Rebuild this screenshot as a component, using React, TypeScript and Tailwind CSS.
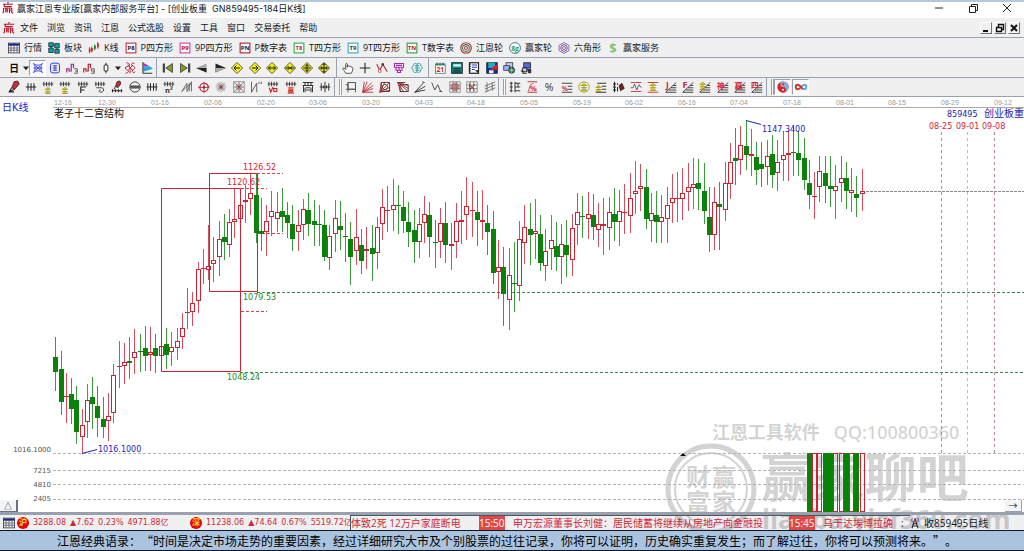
import { useState } from 'react';
import type { ReactNode } from 'react';

type Candle = [number, number, number, number, number];

// up (1) or down (0), high, low, body top, body bottom
const candles: Candle[] = [
  [0, 337, 391, 357, 372], [0, 351, 415, 369, 402], [1, 373, 423, 396, 397], [0, 378, 424, 394, 409],
  [0, 386, 444, 400, 432], [1, 409, 454, 425, 437], [1, 384, 438, 400, 422], [0, 377, 429, 397, 404],
  [0, 386, 437, 406, 418], [0, 397, 438, 419, 427], [1, 393, 441, 416, 421], [1, 364, 423, 375, 413],
  [1, 341, 388, 366, 367], [1, 343, 384, 362, 366], [0, 337, 379, 361, 363], [1, 329, 374, 352, 358],
  [0, 334, 372, 351, 352], [0, 326, 371, 348, 356], [1, 327, 371, 352, 355], [0, 334, 373, 348, 356],
  [1, 325, 371, 346, 356], [0, 328, 369, 344, 355], [1, 332, 366, 347, 352], [1, 328, 360, 341, 348],
  [1, 313, 349, 328, 337], [1, 288, 329, 312, 313], [1, 292, 326, 303, 312], [1, 262, 313, 269, 301],
  [1, 249, 284, 268, 269], [1, 225, 280, 266, 270], [1, 237, 282, 260, 264], [1, 221, 276, 239, 257],
  [0, 214, 260, 237, 242], [1, 209, 257, 222, 245], [1, 188, 238, 219, 222], [1, 188, 230, 205, 219],
  [1, 185, 223, 200, 202], [1, 173, 215, 193, 199], [0, 174, 243, 195, 233], [0, 198, 251, 231, 234],
  [1, 205, 256, 221, 232], [1, 191, 236, 211, 217], [1, 192, 232, 212, 219], [0, 188, 232, 211, 217],
  [0, 202, 238, 215, 223], [0, 205, 251, 224, 239], [1, 210, 251, 225, 232], [1, 199, 240, 209, 225],
  [0, 193, 236, 210, 224], [0, 200, 246, 221, 225], [0, 205, 246, 224, 225], [0, 210, 261, 225, 257],
  [1, 225, 270, 236, 258], [1, 200, 252, 218, 234], [0, 201, 250, 226, 230], [0, 213, 262, 236, 237],
  [0, 222, 285, 239, 257], [1, 209, 265, 237, 251], [0, 229, 274, 245, 261], [1, 227, 269, 249, 251],
  [0, 225, 281, 248, 254], [1, 217, 269, 227, 253], [1, 189, 240, 207, 224], [1, 186, 232, 210, 211],
  [1, 179, 231, 205, 210], [0, 185, 234, 205, 206], [0, 191, 233, 207, 221], [0, 202, 247, 222, 232],
  [0, 210, 263, 230, 242], [1, 208, 258, 224, 242], [1, 196, 243, 214, 223], [0, 202, 257, 215, 237],
  [0, 220, 268, 242, 243], [1, 208, 258, 223, 242], [0, 202, 263, 223, 245], [1, 223, 270, 244, 246],
  [1, 203, 258, 221, 242], [1, 191, 244, 220, 222], [1, 177, 240, 206, 215], [1, 182, 237, 210, 211],
  [0, 191, 246, 212, 220], [1, 190, 240, 220, 222], [0, 205, 255, 223, 232], [0, 211, 284, 229, 273],
  [1, 240, 299, 267, 272], [0, 247, 326, 267, 294], [1, 248, 330, 275, 300], [0, 242, 312, 283, 284],
  [1, 221, 301, 239, 286], [1, 205, 264, 227, 243], [0, 203, 265, 229, 235], [1, 199, 259, 231, 234],
  [0, 215, 271, 234, 263], [1, 229, 281, 251, 266], [1, 215, 270, 240, 249], [0, 222, 271, 246, 257],
  [1, 224, 284, 244, 257], [0, 220, 277, 245, 255], [1, 214, 276, 228, 260], [1, 193, 245, 212, 225],
  [0, 196, 238, 216, 217], [1, 192, 239, 214, 219], [0, 194, 240, 215, 227], [1, 203, 247, 224, 230],
  [1, 198, 255, 224, 226], [1, 197, 250, 212, 228], [0, 188, 241, 214, 222], [1, 190, 246, 211, 222],
  [1, 184, 234, 212, 213], [1, 173, 233, 198, 216], [1, 161, 214, 191, 194], [1, 164, 211, 186, 189],
  [0, 169, 229, 187, 219], [1, 193, 242, 213, 221], [0, 191, 243, 215, 222], [1, 195, 243, 217, 222],
  [1, 187, 243, 205, 219], [1, 174, 223, 198, 203], [1, 172, 222, 198, 199], [1, 168, 220, 193, 199],
  [1, 163, 211, 187, 192], [1, 158, 209, 184, 188], [0, 159, 210, 183, 189], [0, 163, 224, 191, 211],
  [0, 187, 252, 217, 235], [1, 187, 250, 202, 235], [0, 182, 250, 204, 207], [1, 162, 221, 183, 210],
  [1, 143, 199, 162, 184], [0, 128, 185, 158, 161], [1, 126, 175, 145, 160], [0, 120, 170, 146, 155],
  [1, 129, 176, 154, 156], [0, 142, 185, 157, 170], [0, 142, 187, 164, 169], [1, 140, 185, 156, 167],
  [0, 135, 188, 154, 175], [1, 140, 191, 162, 173], [1, 131, 181, 155, 160], [1, 130, 181, 153, 155],
  [0, 126, 176, 152, 153], [0, 131, 176, 153, 160], [0, 138, 190, 158, 180], [0, 160, 209, 183, 195],
  [1, 172, 219, 196, 197], [1, 156, 202, 171, 187], [0, 156, 203, 173, 186], [0, 156, 207, 186, 189],
  [1, 165, 219, 186, 191], [1, 156, 202, 178, 183], [0, 162, 209, 178, 191], [1, 168, 212, 190, 193],
  [0, 176, 217, 194, 198], [1, 169, 211, 191, 194],
];

const dates = [
  '12-16', '12-30', '01-16', '02-06', '02-20', '03-06', '03-20', '04-03', '04-18', '05-05',
  '05-19', '06-02', '06-16', '07-04', '07-18', '08-01', '08-15', '08-29', '09-12',
];

const RED = '#cc2233';
const GREEN = '#0a820a';

const menus = ['文件', '浏览', '资讯', '江恩', '公式选股', '设置', '工具', '窗口', '交易委托', '帮助'];

// --- Icon helpers, everything is drawn on a 16x16 grid ---
const line = (d: string, c = '#222', w = 1.3) => <path d={d} stroke={c} strokeWidth={w} fill="none" />;
const area = (d: string, c = '#222', s = 'none') => <path d={d} fill={c} stroke={s} />;
const word = (t: string, c: string, x = 8, y = 14, size = 10) => (
  <text x={x} y={y} fontSize={size} fill={c} textAnchor="middle" fontWeight="bold">{t}</text>
);
const tile = (t: string, frame: string, c: string) => (
  <>
    <rect x="1.5" y="1.5" width="13" height="13" fill="#fff" stroke={frame} strokeWidth="1.5" />
    {word(t, c, 8, 11, 8)}
  </>
);
const diamond = (inner: string) => (
  <>
    {area('M8 0.5 15.5 8 8 15.5 0.5 8Z', '#f4ee1c', '#333')}
    {line(inner, '#111', 1.3)}
  </>
);
const fan = line('M1 15 15 2M1 15H15M5 12H15M8 9H15M11 6H15', '#333', 1.2);
const comb = line('M1 4H15M2.5 1V7M6 1V7M9.5 1V7M13 1V7', '#333', 1.2);
const gridBase = 'M1 1H15V15H1ZM1 5.5H15M1 10H15M5.5 1V15M10 1V15';

const icons: Record<string, ReactNode> = {
  table: (
    <>
      <rect x="0.5" y="1.5" width="15" height="13" fill="#fff" stroke="#223" />
      {area('M1 2H15V5H1Z', '#1a2a80')}
      {line('M1 8H15M1 11H15M4 5V14M8 5V14M12 5V14', '#445', 1)}
    </>
  ),
  blocks: (
    <>
      {area('M1 1H7V6H1ZM9 2H15V8H9ZM1 8H7V14H1ZM9 10H15V15H9Z', '#18a0a0', '#123')}
      {line('M7 4 9 5M4 6V8M12 8V10', '#123')}
    </>
  ),
  kline: (
    <>
      {line('M2 7V15M5 6V14M13 0V9', '#c22', 1.2)}
      {line('M9 3V11', '#183', 1.2)}
      {area('M1 9H3.5V13H1ZM4 8H6.5V12H4ZM12 2H14.5V7H12Z', '#d22')}
      {area('M8 5H10.5V9H8Z', '#183')}
    </>
  ),
  p8: tile('P8', '#c03050', '#222'),
  p9: tile('P9', '#d040b0', '#b00'),
  pn: tile('PN', '#b02030', '#222'),
  t8: tile('T8', '#30b050', '#b33'),
  t9: tile('T9', '#30b0c0', '#333'),
  tn: tile('TN', '#30a040', '#a22'),
  wheel: (
    <>
      <circle cx="8" cy="8" r="7" fill="#fff" stroke="#a33" strokeWidth="1.6" />
      <circle cx="8" cy="8" r="4.5" fill="none" stroke="#264" strokeWidth="1.4" />
      <circle cx="8" cy="8" r="2" fill="none" stroke="#a33" strokeWidth="1.4" />
    </>
  ),
  bigWheel: (
    <>
      <circle cx="8" cy="8" r="7.2" fill="#fff" stroke="#468" strokeWidth="1.2" />
      {word('8g', '#2a9a4a', 8, 11.5, 9)}
    </>
  ),
  hex: (
    <>
      {area('M8 0.8 14.5 4.4V11.6L8 15.2 1.5 11.6V4.4Z', '#fff', '#73a')}
      <circle cx="8" cy="8" r="4.4" fill="none" stroke="#24a" strokeWidth="1.2" />
      <circle cx="8" cy="8" r="2" fill="none" stroke="#c33" strokeWidth="1.2" />
    </>
  ),
  dollar: word('$', '#7cc47c', 8, 14, 17),
  day: word('日', '#111', 8, 13, 13),
  caret: area('M4 6H12L8 11Z', '#222'),
  net: line('M2 2C6 5 10 5 14 2M2 14C6 11 10 11 14 14M2 2C5 6 5 10 2 14M14 2C11 6 11 10 14 14M5 5 11 11M11 5 5 11M2 8H14', '#2a3ad0', 1.2),
  note: (
    <>
      <rect x="2" y="1.5" width="12" height="13" rx="3" fill="none" stroke="#2a3ad0" strokeWidth="1.3" />
      {line('M5 5H11M5 8H11M5 11H11M8 5V11', '#2a3ad0', 1.2)}
    </>
  ),
  wave3: (
    <>
      {line('M1 14V9H4V12H7V3H10V8', '#a0259a', 1.6)}
      {line('M11 9H15V12H12M15 12V15H11', '#333', 1)}
    </>
  ),
  wave9: (
    <>
      {line('M1 14V9H4V12H7V3H10V8', '#b02030', 1.6)}
      {line('M15 12H11V9H15V15H11', '#333', 1)}
    </>
  ),
  candle: (
    <>
      {line('M8 1V4M8 12V15')}
      <rect x="5.5" y="4" width="5" height="8" rx="1" fill="#fff" stroke="#222" strokeWidth="1.3" />
    </>
  ),
  spiral: line('M3 1C6 1 8 3 7 5 5 7 2 5 2 8 2 11 5 10 6 12 6 14 4 15 2 15M14 2C11 0 9 3 11 5 13 6 15 6 14 9 13 11 10 10 11 13 12 15 14 14 15 13M5 3 12 12M12 4 6 10M8 7V15', '#b8283a', 1.3),
  flag: (
    <>
      {area('M3 1 12 6 3 6Z', '#d020c0')}
      {area('M3 6H12L16 9 3 13Z', '#28a8d8')}
      {line('M2.5 0V15H15', '#222', 1.2)}
    </>
  ),
  first: <>{area('M14 2V14L5 8Z', '#8a9a10', '#333')}{area('M1 2H4V14H1Z', '#444')}</>,
  last: <>{area('M2 2V14L11 8Z', '#8a9a10', '#333')}{area('M12 2H15V14H12Z', '#444')}</>,
  prev: <>{area('M14 2V14L0 8Z', '#aaa')}{area('M0 8 14 8V14Z', '#222')}</>,
  next: <>{area('M2 2V14L16 8Z', '#222')}{area('M16 8 2 8V14Z', '#aaa')}</>,
  dLeft: diamond('M12 8H4M7 5 4 8 7 11'),
  dRight: diamond('M4 8H12M9 5 12 8 9 11'),
  dBoth: diamond('M3 8H13M6 5.5 3.5 8 6 10.5M10 5.5 12.5 8 10 10.5'),
  dIn: diamond('M2 8H14M5 5.5 7.5 8 5 10.5M11 5.5 8.5 8 11 10.5'),
  dUp: diamond('M8 3V13M3 8H13M5.5 6 8 3.5 10.5 6M5.5 10 8 12.5 10.5 10'),
  dAll: diamond('M8 2V14M2 8H14M6 4 8 2 10 4M6 12 8 14 10 12M5 6V10M11 6V10'),
  hand: area('M5 15C4 12 1 10 1 8.5 2 7.5 4 8.5 5 10V3C5 1.5 7 1.5 7 3V7 5.5C8 4.5 9.5 5 9.5 6 10.5 5 12 5.7 12 7 13 6.2 14.5 7 14.5 8.5 14.5 12 13 13 12.5 15Z', '#fff', '#222'),
  plus: line('M8 1V15M1 8H15', '#222', 1.4),
  path: (
    <>
      {line('M1 3 5 11 9 3 15 13', '#b8283a', 1.5)}
      <circle cx="5" cy="12" r="2" fill="#fff" stroke="#b8283a" />
      <circle cx="9" cy="3" r="1.6" fill="#333" />
    </>
  ),
  stamp: line('M2 2H14V7H2ZM4 4.5H12M4 7V11H12V7M6 11V14H10V11M8 7V11', '#a828b0', 1.5),
  cloud: line('M3 5C3 2 7 1 8 3 10 1 14 2 13 5 16 6 15 10 13 10 13 14 9 15 8 13 6 15 2 14 3 10 0 9 1 6 3 5ZM5 5H11M5 8H12M6 11H11M8 3V13', '#189aa0', 1.2),
  cal: (
    <>
      <rect x="2" y="3" width="13" height="12" fill="#fff" stroke="#377" />
      {area('M2 2H15V5H2Z', '#5ab0a8')}
      {line('M4 1V4M8 1V4M12 1V4')}
      {word('21', '#c22', 8.5, 13.5, 9)}
    </>
  ),
  calc: (
    <>
      <rect x="1" y="1" width="14" height="14" fill="#189a98" stroke="#122" strokeWidth="1.4" />
      {area('M3 3H13V6H3Z', '#dff')}
      {line('M3 8.5H13M3 11H13M3 13.3H13', '#122', 1.3)}
    </>
  ),
  book: (
    <>
      <rect x="2" y="1" width="12" height="14" fill="#fff" stroke="#222" strokeWidth="1.6" />
      {line('M5 4H12M5 7H12M5 10H9', '#2a3ab0', 1.4)}
      {line('M1 3H4M1 6H4M1 9H4M1 12H4', '#222', 1)}
      {area('M9 11H14V15Z', '#222')}
    </>
  ),
  save: (
    <>
      <rect x="1" y="1" width="14" height="14" fill="#1b2a9a" stroke="#111" />
      {area('M3 1H12V8H3Z', '#19b0c0')}
      {area('M7 8 15 3V10H7Z', '#e02020')}
      {area('M4 11H10V15H4Z', '#eee')}
    </>
  ),
  linkPc: (
    <>
      <rect x="4" y="1" width="9" height="6" fill="#cce" stroke="#224" />
      <rect x="1" y="5" width="8" height="6" fill="#9bf" stroke="#224" />
      <circle cx="11.5" cy="11" r="4" fill="#3a8a4a" stroke="#123" />
      {line('M8 11H15M11.5 7V15', '#bde', 0.8)}
    </>
  ),
  servers: (
    <>
      <rect x="5" y="1" width="9" height="7" fill="#5a68d8" stroke="#112" />
      <rect x="3" y="8" width="6" height="5" fill="#ccd" stroke="#112" />
      {area('M9 9H15V15H11Z', '#334')}
      {line('M1 12H4V15H9', '#222', 1.4)}
    </>
  ),
  pen: (
    <>
      {area('M8 1 13 0 15 4 9 11 5 9Z', '#d02838', '#222')}
      {line('M5 9 2 14 9 11M1 14.5H8', '#222', 1.4)}
    </>
  ),
  bars: line('M1 8H15M4 3V13M8 3V13M12 3V13'),
  goldA: <>{comb}{word('金', '#a8a010', 8, 15.5, 9)}</>,
  combF: <>{comb}{line('M5 16V8H12M5 12H10', '#222', 1.5)}</>,
  combS: <>{comb}{line('M3 9H10C14 9 14 15 9 15 6 15 6 12 9 12', '#444', 1.3)}</>,
  penBars: (
    <>
      {area('M8 1 12 0 13 4 9 9 6 7Z', '#d02838', '#222')}
      {line('M1 13H15M2 11V15M6 11V15M10 11V15M14 11V15M6 7 4 11')}
    </>
  ),
  ring: (
    <>
      <circle cx="8" cy="8" r="6.8" fill="none" stroke="#333" strokeWidth="1.2" />
      {line('M1 8H15M4 5.5V10.5M6.6 5.5V10.5M9.3 5.5V10.5M12 5.5V10.5')}
    </>
  ),
  bars4: line('M1 8H15M2.5 3V13M6 3V13M10 3V13M13.5 3V13'),
  n2: <>{comb}{word('n²', '#333', 8, 15.5, 10)}</>,
  sail: line('M1 14 8 3V14M1 14 12 4M8 14 14 1V14M11 3V14', '#555', 1.1),
  target: (
    <>
      <circle cx="8" cy="8.5" r="5.5" fill="none" stroke="#b8283a" strokeWidth="1.5" />
      {line('M8 1V16M0 8.5H15M11 3 15 8', '#b8283a', 1.2)}
      <circle cx="8" cy="8.5" r="1.5" fill="#722" />
    </>
  ),
  burst: (
    <>
      {line('M8 1V15M1 8H15M3 3 13 13M13 3 3 13M5 2 11 14M11 2 5 14M2 5 14 11M2 11 14 5', '#888', 1)}
      <circle cx="8" cy="8" r="2.2" fill="#b8404a" />
    </>
  ),
  burstBox: (
    <>
      {line('M1 1H15V15H1ZM1 1 15 15M15 1 1 15M8 1V15M1 8H15', '#777', 1)}
      <circle cx="8" cy="8" r="4" fill="none" stroke="#888" />
      <circle cx="8" cy="8" r="2.2" fill="#b8404a" />
    </>
  ),
  zig: line('M2 1V15L9 3V15M12 1V4M15 1V4', '#555', 1.2),
  combRed: <>{comb}{line('M3 9 5 15 8 8M8 10H13V14H9V10', '#c22', 1.5)}</>,
  combWin: <>{comb}{word('赢', '#c22', 8, 15.5, 9)}</>,
  rails: line('M1 2H15M1 6H15M4 2V6M8 2V6M12 2V6M2 6V15M14 6V15M5 9H11M5 12H11M4 15V9M12 15V9', '#222', 1.2),
  split: line('M1 8H15M3 3V13M8 1V15M13 3V13M10 6V10M6 6V10', '#222', 1.2),
  frame: line('M4 2H14V11H4ZM1 11H14M4 2V15M14 11V15M1 5H4', '#555', 1.3),
  rays: line('M1 15 3 1M1 15 7 1M1 15 13 2M1 15 15 6M1 15 15 10M1 15H15', '#c0303a', 1.2),
  raysBox: (
    <>
      {line('M1 15 3 2M1 15 8 1M1 15 14 2M1 15 15 8M1 15 15 12', '#c0303a', 1.2)}
      {line('M3 2H14V14H3Z', '#433', 1.2)}
      <circle cx="8" cy="8" r="3.5" fill="none" stroke="#433" />
    </>
  ),
  raysFill: (
    <>
      {line('M1 2 15 14M1 2 15 10M1 2 15 6M1 2 9 15M1 2 5 15', '#c0303a', 1.3)}
      {line('M1 2H11M4 5H15V14H4Z', '#433', 1.2)}
    </>
  ),
  fork: line('M1 15 13 2M1 15 15 7M1 15 15 12M11 1 14 2', '#333', 1.2),
  vee: line('M1 2 5 12 9 5 13 14M11 14H15', '#444', 1.2),
  gridRed: <>{line(gridBase, '#777', 1)}{line('M4 4H12V12H4ZM8 2V14M2 8H14', '#a33', 1)}</>,
  gridFan: <>{line(gridBase, '#777', 1)}{line('M5 12 12 4M5 5 12 13M5 3V13', '#833', 1.3)}</>,
  channel: line('M1 7 15 1M1 11 15 5M1 15 15 9M4 2V14M11 2V13', '#555', 1),
  ladder: line('M3 1V15M8 1V15M1 3H5M1 8H5M1 13H5M8 3H15M8 8H15M8 13H15M12 3V8', '#333', 1.3),
  pctRed: <>{line('M2 1H15M2 15H15', '#a33', 1.2)}{line('M3 14 6 5 10 3', '#c44', 1.2)}{word('%', '#d03040', 10, 13.5, 10)}</>,
  pct: <text x="8" y="13" fontSize="14" fill="#333" textAnchor="middle">%</text>,
  pctLines: <>{line('M1 3H15M9 7H15M9 11H15M1 15H15', '#444', 1.3)}{word('%', '#d03040', 5, 13, 9)}</>,
  coin: <><circle cx="8" cy="8" r="7" fill="none" stroke="#a8a010" strokeWidth="1.2" />{word('金', '#a8a010', 8, 12, 10)}</>,
  goldLines: <>{line('M3 3H15M9 7H15M9 11H15M1 15H15', '#333', 1.3)}{word('金', '#a8a010', 5, 13, 9)}</>,
  penDots: <>{line('M2 1V15M0 4H4M0 8H4M0 12H4M6 3V5M6 8V14', '#222', 1.4)}{area('M8 6 12 3 15 10 10 13Z', '#722', '#222')}</>,
  waveRed: <>{line('M1 2H15M1 14H15', '#c33', 1.2)}{line('M1 9H4L6 4 9 12 12 5 15 9', '#555', 1.2)}</>,
  goldRed: <>{line('M1 2H15M1 15H15', '#c33', 1.2)}{word('金', '#a8a010', 8, 12.5, 10)}</>,
  fanJ: <>{fan}{word('J', '#d02030', 3, 9, 11)}</>,
  fanF: <>{fan}{word('F', '#d02030', 4, 9, 12)}</>,
  fanG: <>{fan}{word('金', '#a8a010', 5, 10, 10)}</>,
  fanS: <>{fan}{word('神', '#d02030', 5, 10, 10)}</>,
  fanY: <>{fan}{word('赢', '#d02030', 6, 11, 11)}</>,
  fan4: <>{fan}{word('四', '#d02030', 5, 9, 10)}</>,
  taiji: (
    <>
      <circle cx="8" cy="8" r="7.5" fill="#e02020" />
      {area('M8 0.5A7.5 7.5 0 0 1 8 15.5 3.75 3.75 0 0 0 8 8 3.75 3.75 0 0 1 8 0.5Z', '#8aa8e0')}
      <circle cx="8" cy="4.3" r="1.3" fill="#e02020" />
      <circle cx="8" cy="11.7" r="1.3" fill="#fff" />
    </>
  ),
  infinity: (
    <>
      {line('M8 8C5 4 1 4 1 8S5 12 8 8', '#d03030', 2.6)}
      {line('M8 8C11 4 15 4 15 8S11 12 8 8', '#58a8e0', 2.6)}
      {line('M5.5 5.5 10.5 10.8', '#d03030', 2.4)}
    </>
  ),
};

function Icon({ name }: { name: string }) {
  return (
    <svg viewBox="0 0 16 16" className="h-3 w-3 shrink-0 overflow-visible" aria-hidden="true">
      {icons[name]}
    </svg>
  );
}

const chartTools = [
  ['table', '行情'], ['blocks', '板块'], ['kline', 'K线'], ['p8', 'P四方形'], ['p9', '9P四方形'],
  ['pn', 'P数字表'], ['t8', 'T四方形'], ['t9', '9T四方形'], ['tn', 'T数字表'], ['wheel', '江恩轮'],
  ['bigWheel', '赢家轮'], ['hex', '六角形'], ['dollar', '赢家服务'],
];

const periodTools = ['day', 'caret', 'net', 'note', 'wave3', 'wave9', 'candle', 'caret', 'spiral', 'flag'];
const moveTools = ['first', 'last', 'prev', 'next', 'dLeft', 'dRight', 'dBoth', 'dIn', 'dUp', 'dAll'];
const cursorTools = ['hand', 'plus', 'path', 'stamp', 'cloud'];
const systemTools = ['cal', 'calc', 'book', 'save', 'linkPc', 'servers'];
const gannTools = [
  'pen', 'bars', 'goldA', 'goldA', 'combF', 'combS', 'penBars', 'ring', 'bars4', 'n2',
  'sail', 'target', 'burst', 'burstBox', 'zig', 'combRed', 'combWin', 'rails', 'split',
];
const rayTools = ['frame', 'rays', 'raysBox', 'raysFill', 'fork', 'vee', 'gridRed', 'gridFan', 'channel'];
const levelTools = [
  'ladder', 'pctRed', 'pct', 'pctLines', 'coin', 'goldLines', 'penDots', 'waveRed', 'goldRed',
  'fanJ', 'fanF', 'fanG', 'fanS', 'fanY', 'fan4',
];

function Tools({ items, className, pressed = [] }: { items: string[]; className: string; pressed?: string[] }) {
  const [active, setActive] = useState(pressed);
  const toggle = (name: string) =>
    setActive(active.includes(name) ? active.filter((n) => n !== name) : [...active, name]);

  return (
    <div className={`flex h-full items-center justify-between ${className}`}>
      {items.map((name, i) => (
        <button
          key={i}
          aria-label={name}
          onClick={() => toggle(name)}
          className={`flex h-4 items-center justify-center ${name === 'caret' ? 'w-[7px]' : 'w-[17px]'} ${
            active.includes(name) ? 'border border-white border-t-gray-400 border-l-gray-400 bg-gray-50' : ''
          }`}
        >
          <Icon name={name} />
        </button>
      ))}
    </div>
  );
}

const Divider = () => <div className="h-full w-px shrink-0 bg-gray-400" />;
const Grip = () => <div className="h-4 w-[3px] shrink-0 border-x border-gray-400 bg-white" />;

function Logo() {
  return (
    <svg viewBox="0 0 16 16" className="h-3 w-3 shrink-0" aria-hidden="true">
      {line('M1 3H15M8 0V3M3 3V6H13M3 8H13M2 8V13L1 15M5 8V14M7 8V14M10 8V15M13 8V14L15 15M5 11H7M10 11H13', '#b8182a', 1.5)}
    </svg>
  );
}

function Chart() {
  const cx = (i: number) => Math.round(55.3 + i * 5.27);
  return (
    <svg
      viewBox="0 97 1024 415"
      className="relative block w-full font-['DejaVu_Sans','Noto_Sans_CJK_SC',sans-serif] text-[8px]"
      role="img"
      aria-label="日K线"
    >
      {/* Date axis */}
      <g fill="#999" className="font-['Liberation_Sans',sans-serif] text-[7px]">
        {dates.map((d, i) => (
          <text key={d} x={Math.round(i === 1 ? 98 : i === 0 ? 54 : 46 + i * 52.65)} y="105">{d}</text>
        ))}
      </g>
      <path d="M53 107.5H1024" stroke="#aaa" />
      <text x="2" y="111" fontSize="10" fill="#2222cc">日K线</text>
      <text x="54" y="117" fontSize="10" fill="#111">老子十二宫结构</text>
      <text x="947" y="117" fill="#2222aa">859495</text>
      <text x="984" y="117" fontSize="10" fill="#2222aa">创业板重</text>
      <g fill="#dd2233">
        <text x="929" y="129">08-25</text>
        <text x="956" y="129">09-01</text>
        <text x="982" y="129">09-08</text>
      </g>

      {/* Price and volume levels */}
      <path d="M53 453.5H1024M53 470.5H1024M53 484.5H1024M53 499.5H1024" stroke="#b4b4b4" strokeDasharray="3 2" />
      <g fill="#555" textAnchor="end" className="font-['DejaVu_Sans',sans-serif] text-[7px]">
        <text x="51" y="452">1016.1000</text>
        <text x="51" y="473">7215</text>
        <text x="51" y="487">4810</text>
        <text x="51" y="501">2405</text>
      </g>
      <path d="M866 191.5H1024" stroke="#888" strokeDasharray="3 1" />
      <g strokeDasharray="3 3">
        <path d="M941.5 132V453M994.5 132V453" stroke="#c8808a" />
        <path d="M967.5 132V453" stroke="#8cd0e4" />
      </g>
      <path d="M257 292.5H1024M240 372.5H1024" stroke="#3c8a4a" strokeDasharray="3 2" />
      <path d="M257 173.5H283M241 188.5H267M257 233.5H283M241 311.5H267" stroke="#d8404e" strokeDasharray="3 2" />

      {/* Candles */}
      {candles.map(([up, high, low, top, bottom], i) => {
        const x = cx(i);
        const color = up ? RED : GREEN;
        const tall = bottom - top > 1;
        return (
          <g key={i}>
            <rect x={x} y={high} width="1" height={low - high} fill={color} opacity="0.8" />
            {!tall && <rect x={x - 2} y={top} width="5" height="1" fill={color} />}
            {tall && !up && <rect x={x - 2} y={top} width="5" height={bottom - top} fill={color} />}
            {tall && up === 1 && (
              <rect x={x - 1.5} y={top + 0.5} width="4" height={bottom - top - 1} fill="#fff" stroke={color} />
            )}
          </g>
        );
      })}

      {/* Volume */}
      {candles.slice(143).map(([up], i) => (
        <rect
          key={i}
          x={cx(i + 143) - (up ? 1.5 : 2)}
          y={up ? 453.5 : 453}
          width={up ? 4 : 5}
          height={up ? 58 : 59}
          fill={up ? 'none' : GREEN}
          stroke={up ? RED : 'none'}
        />
      ))}

      {/* Gann boxes */}
      <path d="M161.5 188.5H240.5V371.5H161.5ZM209.5 173.5H257.5V291.5H209.5Z" fill="none" stroke={RED} />
      <g fill="#dd2233">
        <text x="243" y="170">1126.52</text>
        <text x="227" y="185">1120.62</text>
      </g>
      <g fill="#1a8a1a">
        <text x="243" y="300">1079.53</text>
        <text x="227" y="380">1048.24</text>
      </g>
      <path d="M82 453.5 97 449.5M746 120.5 761 124.5" stroke="#2222aa" fill="none" />
      <g fill="#2222cc">
        <text x="98" y="452">1016.1000</text>
        <text x="762" y="132">1147.3400</text>
      </g>
      <path d="M680 456 683 453 686 456Z" fill="#111" />
    </svg>
  );
}

function Watermark() {
  return (
    <svg
      viewBox="655 416 369 120"
      className="pointer-events-none absolute right-0 -bottom-6 w-[36%] font-['Noto_Sans','Noto_Sans_CJK_SC',sans-serif] font-bold"
      opacity="0.17"
      aria-hidden="true"
    >
      <g fontSize="18" fontWeight="600" opacity="1">
        <text x="712" y="439">江恩工具软件</text>
        <text x="834" y="439" fontWeight="500">QQ:100800360</text>
      </g>
      <circle cx="711" cy="489" r="43" fill="none" stroke="#000" strokeWidth="5" />
      <circle cx="711" cy="489" r="36" fill="none" stroke="#000" strokeWidth="2" />
      <g fontSize="24">
        <text x="686" y="486">财</text>
        <text x="712" y="486">赢</text>
        <text x="686" y="511">富</text>
        <text x="712" y="511">家</text>
      </g>
      <text x="761" y="497" fontSize="52">赢家聊吧</text>
      <text x="762" y="529" fontSize="27">liaoba.yjcf360.com</text>
    </svg>
  );
}

function Quote({ badge, values }: { badge: string; values: string[] }) {
  return (
    <>
      <span className="flex h-3 w-3 shrink-0 items-center justify-center rounded-full bg-red-600 text-[8px] leading-none font-bold text-yellow-300">
        {badge}
      </span>
      {values.map((v) => (
        <span key={v}>{v}</span>
      ))}
    </>
  );
}

export default function App() {
  return (
    <div className="min-h-screen w-full overflow-hidden bg-[#f0f0f0] font-['Open_Sans','Noto_Sans_CJK_SC',sans-serif] text-[9px] leading-none text-gray-900">
      {/* Title bar */}
      <header className="flex h-[18px] items-center border-t-2 border-[#b4c8dc] bg-white pr-3 pb-1 pl-0.5">
        <Logo />
        <h1 className="ml-[3px] font-['Inter','Noto_Sans_CJK_SC',sans-serif] whitespace-pre">
          赢家江恩专业版[赢家内部服务平台] - [创业板重  GN859495-184日K线]
        </h1>
        <div className="ml-auto flex items-center gap-6">
          <button aria-label="最小化">
            <svg viewBox="0 0 10 10" className="h-[10px] w-[10px]">{line('M1 5H9', '#222', 1)}</svg>
          </button>
          <button aria-label="还原">
            <svg viewBox="0 0 10 10" className="h-[10px] w-[10px]">{line('M1.5 3.5H7.5V9.5H1.5ZM3.5 3.5V1.5H9.5V7.5H7.5', '#222', 1)}</svg>
          </button>
          <button aria-label="关闭">
            <svg viewBox="0 0 10 10" className="h-[10px] w-[10px]">{line('M1 1 9 9M9 1 1 9', '#222', 1)}</svg>
          </button>
        </div>
      </header>

      {/* Menu */}
      <nav className="flex h-5 items-center border-b border-gray-400 pr-1 pl-[3px]">
        <Logo />
        <div className="ml-[5px] flex gap-[9px]">
          {menus.map((m) => (
            <button key={m}>{m}</button>
          ))}
        </div>
        <div className="ml-auto flex gap-0.5">
          <button aria-label="最小化窗口" className="h-3 w-3 border border-white border-r-gray-500 border-b-gray-500">
            <svg viewBox="0 0 10 10">{line('M2 8H7', '#111', 2)}</svg>
          </button>
          <button aria-label="还原窗口" className="h-3 w-3 border border-white border-r-gray-500 border-b-gray-500">
            <svg viewBox="0 0 10 10">{line('M1.5 4.5H6.5V8.5H1.5ZM3.5 4V1.5H8.5V6.5H7', '#111', 1.4)}</svg>
          </button>
          <button aria-label="关闭窗口" className="h-3 w-3 border border-white border-r-gray-500 border-b-gray-500">
            <svg viewBox="0 0 10 10">{line('M2 2 8 8M8 2 2 8', '#111', 2)}</svg>
          </button>
        </div>
      </nav>

      {/* Toolbars */}
      <div className="flex h-5 items-center gap-1.5 border-b border-gray-400 pl-2">
        {chartTools.map(([icon, label]) => (
          <button key={label} className="flex h-4 items-center gap-1 whitespace-nowrap">
            <Icon name={icon} />
            {label}
          </button>
        ))}
      </div>
      <div className="flex h-5 items-center border-b border-gray-400 pl-[5px]">
        <Tools items={periodTools} className="w-[151px]" pressed={['net']} />
        <Divider />
        <Tools items={moveTools} className="ml-0.5 w-[174px]" />
        <div className="w-[3px]" />
        <Divider />
        <Tools items={cursorTools} className="ml-0.5 w-[86px]" />
        <div className="w-[3px]" />
        <Divider />
        <Tools items={systemTools} className="ml-0.5 w-[104px]" />
      </div>
      <div className="flex h-[19px] items-center border-b border-gray-400 pl-[5px]">
        <Tools items={gannTools} className="w-[329px]" />
        <Divider />
        <div className="w-1" />
        <Grip />
        <Tools items={rayTools} className="w-[156px]" />
        <Divider />
        <div className="w-1" />
        <Grip />
        <Tools items={levelTools} className="w-[260px]" />
        <Divider />
        <div className="w-1" />
        <Grip />
        <Tools items={['taiji', 'infinity']} className="w-[35px]" pressed={['taiji', 'infinity']} />
      </div>

      {/* Chart */}
      <main className="relative bg-white">
        <Watermark />
        <Chart />
        <button aria-label="展开" className="absolute bottom-0 left-0 flex h-3 w-[18px] items-center justify-center border-r-2 border-b border-gray-500 bg-gray-100 text-[8px]">
          △
        </button>
        <button aria-label="向右" className="absolute right-0.5 bottom-0 flex h-3 w-[17px] items-center justify-center border-r border-b border-gray-400 bg-gray-100 text-[9px]">
          →
        </button>
      </main>

      {/* Status bar */}
      <footer className="relative">
        <div className="flex h-[18px] items-center border-t-[3px] border-gray-400 pl-[3px] whitespace-nowrap text-[#d02838]">
          <Icon name="table" />
          <div className="ml-0.5 flex w-[173px] items-center gap-1 font-['DejaVu_Sans','Noto_Sans_CJK_SC',sans-serif] text-[8px]">
            <Quote badge="沪" values={['3288.08', '▲7.62', '0.23%', '4971.88亿']} />
          </div>
          <div className="flex w-[160px] items-center gap-1 overflow-hidden font-['DejaVu_Sans','Noto_Sans_CJK_SC',sans-serif] text-[8px]">
            <Quote badge="深" values={['11238.06', '▲74.64', '0.67%', '5519.72亿']} />
          </div>
          <div className="flex h-full w-[560px] items-center border-t border-l border-gray-600 text-[10px]">
            <span className="w-[128px]">体致2死 12万户家庭断电</span>
            <span className="w-[34px]"><span className="bg-[#e04848] text-white">15:50</span></span>
            <span className="w-[276px]">申万宏源董事长刘健：居民储蓄将继续从房地产向金融投</span>
            <span className="w-[34px]"><span className="bg-[#e04848] text-white">15:45</span></span>
            <span>乌干达埃博拉确</span>
            <span className="ml-2 text-gray-800">:</span>
          </div>
          <svg viewBox="0 0 12 16" className="h-3 w-[10px] shrink-0" aria-hidden="true">
            {line('M6 2 2 15M6 2 10 15M4 9H8M3 12H9', '#223', 1.4)}
            {line('M3 1C1 3 1 5 3 7M9 1C11 3 11 5 9 7', '#24c', 1.2)}
            <circle cx="6" cy="4" r="1.6" fill="#c22" />
          </svg>
          <span className="ml-1 text-[10px] text-gray-900">收859495日线</span>
        </div>
        <p className="h-[21px] overflow-hidden border-y border-gray-900 bg-[#aac4e0] pl-[57px] font-['Noto_Sans_CJK_SC',sans-serif] text-[12px] leading-[19px] whitespace-nowrap text-black [text-spacing-trim:space-all]">
          江恩经典语录：“时间是决定市场走势的重要因素，经过详细研究大市及个别股票的过往记录，你将可以证明，历史确实重复发生；而了解过往，你将可以预测将来。”。
        </p>
      </footer>
    </div>
  );
}
